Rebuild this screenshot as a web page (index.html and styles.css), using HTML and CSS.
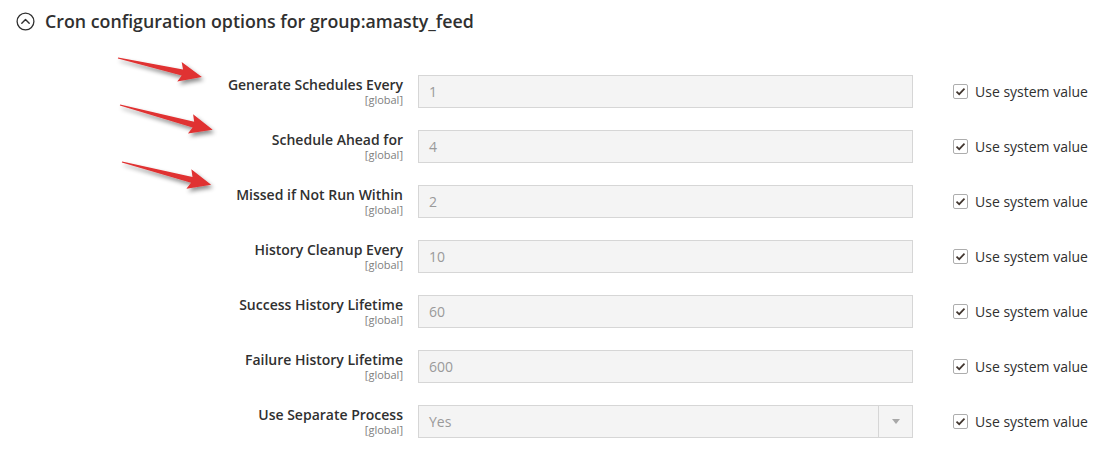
FILE: index.html
```html
<!DOCTYPE html>
<html>
<head>
<meta charset="utf-8">
<link rel="stylesheet" href="styles.css">
</head>
<body>
<div class="page">
  <div class="section-head">
    <svg class="toggle" width="19" height="19" viewBox="0 0 19 19">
      <circle cx="9.5" cy="9.5" r="8.4" fill="none" stroke="#303030" stroke-width="1.3"/>
      <path d="M5.8 11.2 L9.5 7.5 L13.2 11.2" fill="none" stroke="#303030" stroke-width="1.4" stroke-linecap="round" stroke-linejoin="round"/>
    </svg>
    <span class="section-title">Cron configuration options for group:amasty_feed</span>
  </div>

  <div class="form">
    <div class="label"><span class="name">Generate Schedules Every</span><span class="scope">[global]</span></div>
    <div class="control"><div class="input">1</div></div>
    <div class="sys"><span class="cb"><svg width="11" height="9" viewBox="0 0 11 9"><path d="M1.5 4.6 L4.2 7.2 L9.5 1.6" fill="none" stroke="#41362f" stroke-width="1.7"/></svg></span>Use system value</div>

    <div class="label"><span class="name">Schedule Ahead for</span><span class="scope">[global]</span></div>
    <div class="control"><div class="input">4</div></div>
    <div class="sys"><span class="cb"><svg width="11" height="9" viewBox="0 0 11 9"><path d="M1.5 4.6 L4.2 7.2 L9.5 1.6" fill="none" stroke="#41362f" stroke-width="1.7"/></svg></span>Use system value</div>

    <div class="label"><span class="name">Missed if Not Run Within</span><span class="scope">[global]</span></div>
    <div class="control"><div class="input">2</div></div>
    <div class="sys"><span class="cb"><svg width="11" height="9" viewBox="0 0 11 9"><path d="M1.5 4.6 L4.2 7.2 L9.5 1.6" fill="none" stroke="#41362f" stroke-width="1.7"/></svg></span>Use system value</div>

    <div class="label"><span class="name">History Cleanup Every</span><span class="scope">[global]</span></div>
    <div class="control"><div class="input">10</div></div>
    <div class="sys"><span class="cb"><svg width="11" height="9" viewBox="0 0 11 9"><path d="M1.5 4.6 L4.2 7.2 L9.5 1.6" fill="none" stroke="#41362f" stroke-width="1.7"/></svg></span>Use system value</div>

    <div class="label"><span class="name">Success History Lifetime</span><span class="scope">[global]</span></div>
    <div class="control"><div class="input">60</div></div>
    <div class="sys"><span class="cb"><svg width="11" height="9" viewBox="0 0 11 9"><path d="M1.5 4.6 L4.2 7.2 L9.5 1.6" fill="none" stroke="#41362f" stroke-width="1.7"/></svg></span>Use system value</div>

    <div class="label"><span class="name">Failure History Lifetime</span><span class="scope">[global]</span></div>
    <div class="control"><div class="input">600</div></div>
    <div class="sys"><span class="cb"><svg width="11" height="9" viewBox="0 0 11 9"><path d="M1.5 4.6 L4.2 7.2 L9.5 1.6" fill="none" stroke="#41362f" stroke-width="1.7"/></svg></span>Use system value</div>

    <div class="label"><span class="name">Use Separate Process</span><span class="scope">[global]</span></div>
    <div class="control"><div class="input select"><span class="val">Yes</span><span class="btn"><svg width="8" height="5" viewBox="0 0 8 5"><path d="M0 0 H8 L4 5 Z" fill="#a8a8a8"/></svg></span></div></div>
    <div class="sys"><span class="cb"><svg width="11" height="9" viewBox="0 0 11 9"><path d="M1.5 4.6 L4.2 7.2 L9.5 1.6" fill="none" stroke="#41362f" stroke-width="1.7"/></svg></span>Use system value</div>
  </div>

  <svg class="arrows" width="260" height="220" viewBox="0 0 260 220">
    <defs>
      <filter id="sh" x="-20%" y="-50%" width="140%" height="200%">
        <feDropShadow dx="2" dy="3" stdDeviation="2" flood-color="#000" flood-opacity="0.45"/>
      </filter>
    </defs>
    <g fill="#e03131" filter="url(#sh)">
      <polygon transform="translate(118 58) rotate(12.7)" points="0,-0.6 66,-3 63,-10 86,0 63,10 66,3 0,0.6"/>
      <polygon transform="translate(120 105) rotate(15)" points="0,-0.6 76,-3 73,-10 96,0 73,10 76,3 0,0.6"/>
      <polygon transform="translate(122 162) rotate(14.3)" points="0,-0.6 72,-3 69,-10 92,0 69,10 72,3 0,0.6"/>
    </g>
  </svg>
</div>
</body>
</html>
```

FILE: styles.css
```css
* { box-sizing: border-box; }
html, body { margin: 0; padding: 0; background: #fff; }
body {
  font-family: "Open Sans", "Noto Sans", sans-serif;
  color: #303030;
  width: 1100px;
  height: 452px;
  overflow: hidden;
}
.page { position: relative; }

.section-head {
  display: flex;
  align-items: center;
  padding: 9px 0 0 16px;
  height: 33px;
}
.toggle { margin-right: 10px; flex: none; }
.section-title {
  font-size: 17.8px;
  font-weight: 600;
  line-height: 24px;
  color: #303030;
}

.form {
  display: grid;
  grid-template-columns: 403px 495px 1fr;
  column-gap: 15px;
  row-gap: 22px;
  margin-top: 42px;
}
.label {
  display: flex;
  flex-direction: column;
  align-items: flex-end;
  text-align: right;
  padding-top: 1px;
}
.name {
  font-size: 14px;
  font-weight: 600;
  line-height: 17px;
  color: #303030;
}
.scope {
  font-size: 11px;
  line-height: 14px;
  color: #808080;
}
.control { height: 33px; }
.input {
  height: 33px;
  border: 1px solid #d6d6d6;
  background: #f4f4f4;
  color: #9a9a9a;
  font-size: 14px;
  line-height: 31px;
  padding-left: 10px;
}
.select {
  display: flex;
  padding-left: 0;
}
.select .val { flex: 1; padding-left: 10px; }
.select .btn {
  width: 34px;
  border-left: 1px solid #d6d6d6;
  display: flex;
  align-items: center;
  justify-content: center;
}
.select .btn svg { margin-left: 1px; }

.sys {
  height: 33px;
  display: flex;
  align-items: center;
  padding-left: 25px;
  font-size: 14px;
  color: #303030;
}
.cb {
  width: 15px;
  height: 15px;
  border: 1px solid #adadad;
  border-radius: 2px;
  background: #fff;
  display: flex;
  align-items: center;
  justify-content: center;
  margin-right: 7px;
  flex: none;
}

.arrows {
  position: absolute;
  left: 0;
  top: 0;
  pointer-events: none;
}
```
